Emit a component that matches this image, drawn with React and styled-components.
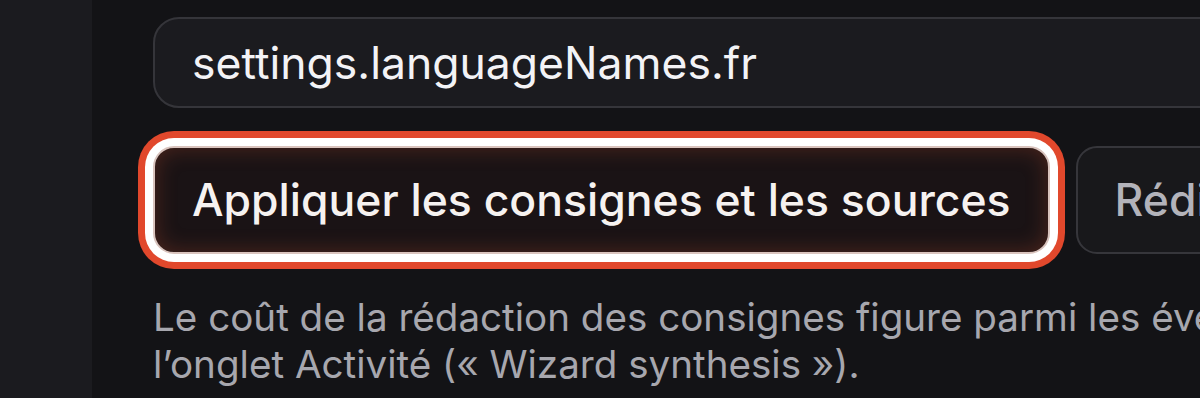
import React from 'react';
import styled, { createGlobalStyle } from 'styled-components';

const GlobalStyle = createGlobalStyle`
  html, body {
    margin: 0;
    padding: 0;
    background: #131316;
    overflow: hidden;
  }
  body {
    font-family: Inter, "Noto Sans", sans-serif;
    -webkit-font-smoothing: antialiased;
  }
`;

const App = () => {
  return (
    <>
      <GlobalStyle />
      <Page>
        <Sidebar />
        <Main>
          <Field value="settings.languageNames.fr" readOnly />
          <ButtonRow>
            <ActionButton $focused>Appliquer les consignes et les sources</ActionButton>
            <ActionButton>Rédiger les consignes</ActionButton>
          </ButtonRow>
          <Hint>
            Le coût de la rédaction des consignes figure parmi les événements de
            l’onglet Activité (« Wizard synthesis »).
          </Hint>
        </Main>
      </Page>
    </>
  );
};

export default App;

const Page = styled.div`
  display: flex;
  width: 1200px;
  height: 398px;
  overflow: hidden;
`;

const Sidebar = styled.aside`
  flex: 0 0 92px;
  background: #1b1b1f;
`;

const Main = styled.main`
  flex: 0 0 1400px;
  display: flex;
  flex-direction: column;
  padding: 17px 0 0 61px;
  box-sizing: border-box;
`;

const Field = styled.input`
  width: 1320px;
  height: 91px;
  box-sizing: border-box;
  padding: 0 37px;
  border: 2px solid #35353a;
  border-radius: 26px;
  background: #1b1b1f;
  color: #f3f3f6;
  font-family: Inter, sans-serif;
  font-size: 44.5px;
  outline: none;
`;

const ButtonRow = styled.div`
  display: flex;
  gap: 26px;
  margin-top: 38px;
  white-space: nowrap;
`;

const ActionButton = styled.button`
  flex: 0 0 auto;
  height: 108px;
  box-sizing: border-box;
  padding: 0 37px;
  border-radius: 21px;
  font-family: Inter, sans-serif;
  font-size: 44.5px;
  font-weight: 500;
  cursor: pointer;
  border: 2px solid ${({ $focused }) => ($focused ? '#d9c3bd' : '#36363b')};
  background: ${({ $focused }) => ($focused ? '#1a1315' : '#18181b')};
  color: ${({ $focused }) => ($focused ? '#f6f2f0' : '#b3b3ba')};
  box-shadow: ${({ $focused }) =>
    $focused
      ? 'inset 0 0 22px rgba(214, 86, 52, 0.28), 0 0 0 8px #ffffff, 0 0 0 15px #e1482c'
      : 'none'};
`;

const Hint = styled.p`
  margin: 40px 0 0;
  width: 1330px;
  color: #a7a7ae;
  font-size: 38.6px;
  line-height: 47px;
`;
